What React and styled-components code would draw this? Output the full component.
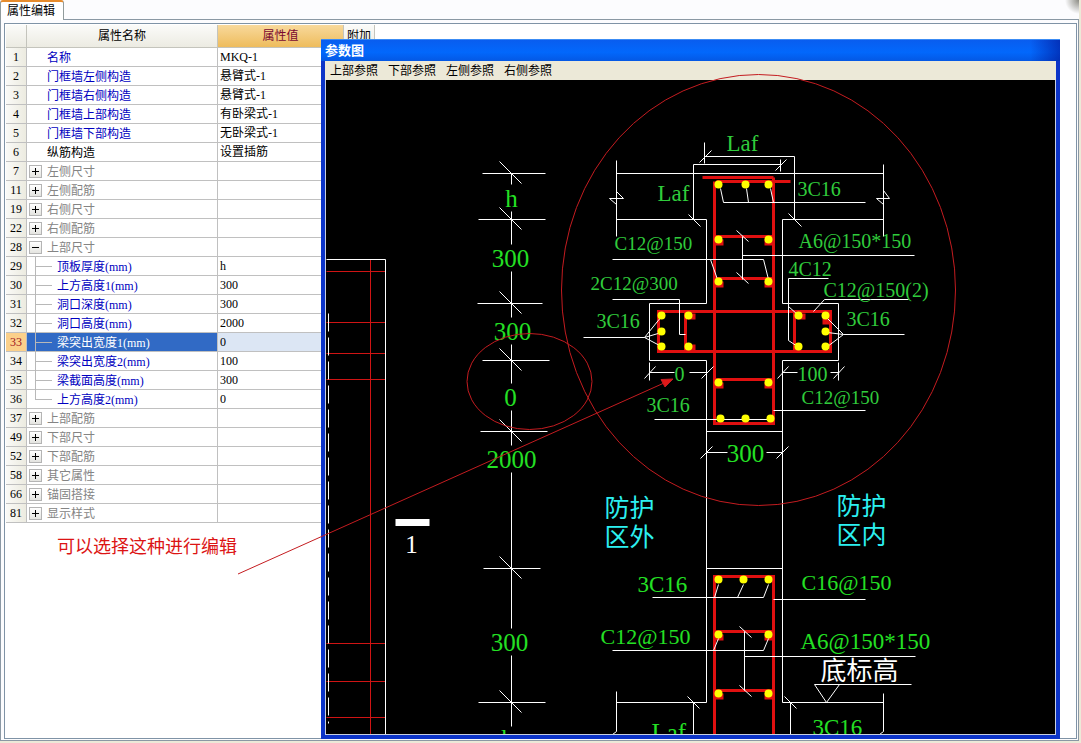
import { useState } from 'react';
import styled, { createGlobalStyle } from 'styled-components';

const rows = [
    { no: 1, name: '名称', value: 'MKQ-1', kind: 'field' },
    { no: 2, name: '门框墙左侧构造', value: '悬臂式-1', kind: 'field' },
    { no: 3, name: '门框墙右侧构造', value: '悬臂式-1', kind: 'field' },
    { no: 4, name: '门框墙上部构造', value: '有卧梁式-1', kind: 'field' },
    { no: 5, name: '门框墙下部构造', value: '无卧梁式-1', kind: 'field' },
    { no: 6, name: '纵筋构造', value: '设置插筋', kind: 'plain' },
    { no: 7, name: '左侧尺寸', kind: 'group' },
    { no: 11, name: '左侧配筋', kind: 'group' },
    { no: 19, name: '右侧尺寸', kind: 'group' },
    { no: 22, name: '右侧配筋', kind: 'group' },
    { no: 28, name: '上部尺寸', kind: 'group', open: true },
    { no: 29, name: '顶板厚度(mm)', value: 'h', kind: 'child' },
    { no: 30, name: '上方高度1(mm)', value: '300', kind: 'child' },
    { no: 31, name: '洞口深度(mm)', value: '300', kind: 'child' },
    { no: 32, name: '洞口高度(mm)', value: '2000', kind: 'child' },
    { no: 33, name: '梁突出宽度1(mm)', value: '0', kind: 'child' },
    { no: 34, name: '梁突出宽度2(mm)', value: '100', kind: 'child' },
    { no: 35, name: '梁截面高度(mm)', value: '300', kind: 'child' },
    { no: 36, name: '上方高度2(mm)', value: '0', kind: 'child', last: true },
    { no: 37, name: '上部配筋', kind: 'group' },
    { no: 49, name: '下部尺寸', kind: 'group' },
    { no: 52, name: '下部配筋', kind: 'group' },
    { no: 58, name: '其它属性', kind: 'group' },
    { no: 66, name: '锚固搭接', kind: 'group' },
    { no: 81, name: '显示样式', kind: 'group' },
];

const menus = ['上部参照', '下部参照', '左侧参照', '右侧参照'];

// y, x1, x2 of the level marks on the left dimension chain
const levels = [
    [173, 482, 545], [219, 478, 545], [303, 477, 542], [360, 482, 549],
    [431, 480, 547], [568, 483, 540], [702, 478, 545],
];

const chain = [[173, 184], [211, 244], [271, 317], [344, 383], [410, 445], [472, 628], [655, 726]];

const bars = [
    [718, 184], [745, 184], [768, 184], [718, 239], [768, 239], [718, 281], [768, 281],
    [661, 315], [661, 331], [661, 346], [688, 315], [688, 346],
    [798, 315], [798, 346], [825, 315], [825, 331], [825, 346],
    [718, 382], [768, 382], [720, 418], [745, 418], [770, 418],
    [718, 579], [743, 579], [768, 579], [718, 634], [768, 634], [718, 693], [768, 693],
];

const hooks = [
    [715, 239], [764, 239], [715, 281], [764, 281], [715, 382], [764, 382],
    [715, 634], [764, 634], [715, 693], [764, 693],
    [687, 313], [687, 344], [797, 313], [822, 318],
];

const outlines = [
    'M616 160V236M616 191L623 198H609L616 204',
    'M883 164V236M883 190L889 198H876L883 204',
    'M616 173H883',
    'M616 219H706V303H649V360H706V702H616',
    'M883 219H782V303H838V360H782V702H883',
    'M706 431H782M706 568H782',
    'M616 691V731L612 734M883 693V731L879 734',
];

const leaders = [
    'M704 142V163M704 156H794V219M699 162L711 150M788 213L801 226',
    'M780 159V171M780 164H693V219M775 170L786 159M688 214L700 226',
    'M720 188L723 202H865M746 188L748 202M770 188L773 202',
    'M612 259H763L768 279M710 259L717 279',
    'M742 236V279M736 230L748 241M736 272L748 283M742 255H914',
    'M828 278H788V340L797 346M788 306L797 314',
    'M908 299H824L813 311',
    'M612 299H679V334H685',
    'M583 337H644L661 316M644 337L661 332M644 337L661 346',
    'M904 334H843L827 318M843 334L827 332M843 334L827 346',
    'M649 362V380M649 372H674M689 372H706M644 378L655 366M701 378L713 366',
    'M838 362V380M782 372H797M830 372H838M777 378L788 366M833 378L844 366',
    'M654 419H773M773 410H865',
    'M706 452H727M766 452H782M700 458L712 446M776 458L788 446',
    'M652 597H763L768 584M718 584L714 597M743 584L737 597',
    'M773 599H865',
    'M612 650H763L768 638M718 638L713 650',
    'M744 631V690M739 626L751 637M739 685L751 696M744 656H915',
    'M911 684H814L826 702L839 684',
    'M693 734V702M687 696L699 708M790 734V702M784 696L796 708',
];

const steel = [
    'M702 177H773', 'M716 181H790', 'M714 181V423H773V177',
    'M714 236H773M714 278H773M714 379H773',
    'M658 311H830V351H658Z', 'M685 311V351M794 311V351',
    'M714 740V576H773V740', 'M714 631H773M714 690H773',
];

const labels = [
    { text: 'Laf', x: 726, y: 150, size: 23 },
    { text: 'Laf', x: 657, y: 200, size: 23 },
    { text: '3C16', x: 797, y: 195, size: 20 },
    { text: 'C12@150', x: 614, y: 249, size: 19 },
    { text: 'A6@150*150', x: 798, y: 247, size: 20 },
    { text: '4C12', x: 788, y: 275, size: 20 },
    { text: 'C12@150(2)', x: 823, y: 296, size: 20 },
    { text: '2C12@300', x: 590, y: 289, size: 19 },
    { text: '3C16', x: 596, y: 327, size: 20 },
    { text: '3C16', x: 846, y: 325, size: 20 },
    { text: '0', x: 674, y: 380, size: 20 },
    { text: '100', x: 797, y: 380, size: 20 },
    { text: 'C12@150', x: 801, y: 403, size: 19 },
    { text: '3C16', x: 646, y: 411, size: 20 },
    { text: '3C16', x: 637, y: 591, size: 23, bright: true },
    { text: 'C16@150', x: 801, y: 589, size: 22, bright: true },
    { text: 'C12@150', x: 600, y: 643, size: 22, bright: true },
    { text: 'A6@150*150', x: 800, y: 648, size: 23, bright: true },
    { text: '3C16', x: 812, y: 734, size: 23, bright: true },
    { text: 'Laf', x: 651, y: 740, size: 25, bright: true },
];

const dimLabels = [
    ['h', 511, 206], ['300', 510, 266], ['300', 512, 339], ['0', 510, 405],
    ['2000', 511, 467], ['300', 509, 650], ['h', 507, 746], ['300', 745, 461],
];

function Drawing() {
    return (
        <Sheet role="img" aria-label="参数图">
            {/* half a pixel keeps the one pixel strokes sharp */}
            <g transform="translate(-325.5 -79.5)">
                <RedLine d="M370 259V740M326 271H385M326 322H385M326 353H385M326 379H385M326 643H385M326 681H385M326 717H385" />
                <WhiteLine d="M326 259H385V740" />
                <WhiteLine d="M328 313V723" strokeDasharray="18 6" />
                <WhiteLine d="M395 522H429" $width={7} />

                {chain.map(([from, to]) => (
                    <WhiteLine key={from} d={`M511 ${from}V${to}`} />
                ))}
                {levels.map(([y, from, to]) => (
                    <WhiteLine key={y} d={`M${from} ${y}H${to}M499 ${y - 12}L521 ${y + 10}`} />
                ))}

                {steel.map(d => <Steel key={d} d={d} />)}
                {hooks.map(([x, y]) => (
                    <rect key={`${x}-${y}`} x={x} y={y} width="8" height="6" fill="#e01010" />
                ))}
                {outlines.map(d => <WhiteLine key={d} d={d} />)}
                {leaders.map(d => <WhiteLine key={d} d={d} />)}
                {bars.map(([x, y]) => (
                    <circle key={`${x}-${y}`} cx={x} cy={y} r="4" fill="#ffff00" />
                ))}

                {labels.map(({ text, x, y, size, bright }) => (
                    <Label key={`${x}-${y}`} x={x} y={y} $size={size} $color={bright && '#24e024'}>{text}</Label>
                ))}
                {dimLabels.map(([text, x, y]) => (
                    <Label key={`${x}-${y}`} x={x} y={y} $size={25} $color="#24e024" textAnchor="middle">{text}</Label>
                ))}
                <Label x={411} y={552} $size={25} $color="#fff" textAnchor="middle">1</Label>
                <Label x={604} y={516} $size={25} $color="#2cf0f0">防护</Label>
                <Label x={604} y={545} $size={25} $color="#2cf0f0">区外</Label>
                <Label x={836} y={514} $size={25} $color="#2cf0f0">防护</Label>
                <Label x={836} y={543} $size={25} $color="#2cf0f0">区内</Label>
                <Label x={820} y={679} $size={26} $color="#fff">底标高</Label>
            </g>
        </Sheet>
    );
}

function PropertyTable() {
    const [selected, setSelected] = useState(33);

    return (
        <Table>
            <colgroup>
                <Col $width={21} />
                <Col $width={191} />
                <Col $width={126} />
                <Col $width={31} />
            </colgroup>
            <thead>
                <tr>
                    <HeadCell />
                    <HeadCell>属性名称</HeadCell>
                    <HeadCell $active>属性值</HeadCell>
                    <HeadCell>附加</HeadCell>
                </tr>
            </thead>
            <tbody>
                {rows.map(row => {
                    const active = row.no === selected;
                    return (
                        <tr key={row.no} onClick={() => setSelected(row.no)}>
                            <NumberCell $active={active}>{row.no}</NumberCell>
                            <NameCell $kind={row.kind} $active={active}>
                                <NameLine>
                                    <Gutter $child={row.kind === 'child'}>
                                        {row.kind === 'group' && (
                                            <Toggle aria-label={row.open ? '收起' : '展开'} $open={row.open} />
                                        )}
                                        {row.kind === 'child' && <Branch $last={row.last} />}
                                    </Gutter>
                                    <NameText>{row.name}</NameText>
                                </NameLine>
                            </NameCell>
                            <ValueCell $active={active}>{row.value}</ValueCell>
                            <ValueCell />
                        </tr>
                    );
                })}
            </tbody>
        </Table>
    );
}

export default function App() {
    return (
        <Page>
            <GlobalStyle />
            <TabStrip>
                <Tab>属性编辑</Tab>
            </TabStrip>
            <Panel>
                <PanelBody>
                    <PropertyTable />
                    <Note>可以选择这种进行编辑</Note>
                </PanelBody>
            </Panel>

            <Dialog>
                <TitleBar>参数图</TitleBar>
                <MenuBar>
                    {menus.map(item => <MenuButton key={item}>{item}</MenuButton>)}
                </MenuBar>
                <Drawing />
            </Dialog>

            <Markup aria-hidden="true">
                <ellipse cx="758.5" cy="290" rx="197" ry="215.5" />
                <ellipse cx="529.5" cy="381.5" rx="62.5" ry="48" />
                <path d="M238 574L664 383" />
                <path d="M673 379L661 379.5L665 387Z" fill="#e01818" />
            </Markup>
        </Page>
    );
}

// Styles
const GlobalStyle = createGlobalStyle`
    * {
        box-sizing: border-box;
    }

    body {
        margin: 0;
        background: #ece9d8;
        font-family: "Liberation Serif", "Noto Sans CJK SC", serif;
        font-size: 12px;
        color: #000;
    }

    button {
        font: inherit;
        color: inherit;
    }
`;

const Page = styled.div`
    position: relative;
    display: flex;
    flex-direction: column;
    min-height: 100vh;
    padding: 0 2px 2px 0;
    overflow: hidden;
`;

const TabStrip = styled.div`
    display: flex;
    height: 19px;
    background: radial-gradient(circle at 100% 0, #8c8c84 0, #fcfcfe 14px);
`;

const Tab = styled.button`
    width: 64px;
    height: 20px;
    padding: 0 0 0 6px;
    border: 1px solid #919b9c;
    border-top: 2px solid #e68b2c;
    border-bottom: 0;
    border-radius: 3px 3px 0 0;
    background: #fff;
    line-height: 16px;
    text-align: left;
    white-space: nowrap;
    z-index: 1;
`;

const Panel = styled.div`
    flex: 1;
    display: flex;
    padding: 3px 1px 1px 3px;
    border: 1px solid #8a98a4;
    background: #fcfcfe;
`;

const PanelBody = styled.div`
    flex: 1;
    padding: 1px;
    border: 1px solid #7f93a6;
    background: #fff;
`;

const Table = styled.table`
    width: 369px;
    table-layout: fixed;
    border-collapse: separate;
    border-spacing: 0;
`;

const Col = styled.col`
    width: ${props => props.$width}px;
`;

const HeadCell = styled.th`
    height: 23px;
    padding: 0;
    overflow: hidden;
    border-right: 1px solid #c4c4bc;
    border-bottom: 1px solid #c4c4bc;
    background: ${props => props.$active
        ? 'linear-gradient(#f8d99c, #eebc5c)'
        : 'linear-gradient(#fbfbf9, #ecebe2)'};
    color: ${props => props.$active ? '#7a0830' : '#000'};
    font-weight: normal;
    line-height: 22px;
    white-space: nowrap;
`;

const Cell = styled.td`
    height: 19px;
    padding: 0;
    border-right: 1px solid #c0c0c0;
    border-bottom: 1px solid #c0c0c0;
    line-height: 18px;
    white-space: nowrap;
`;

const NumberCell = styled(Cell)`
    background: ${props => props.$active ? '#fbd08a' : 'linear-gradient(90deg, #fafaf7, #ecebe0)'};
    color: ${props => props.$active ? '#a01020' : '#000'};
    text-align: center;
`;

const nameColors = { field: '#0000c0', child: '#0000c0', plain: '#000', group: '#848484' };

const NameCell = styled(Cell)`
    background: ${props => props.$active ? '#316ac5' : '#fff'};
    color: ${props => props.$active ? '#fff' : nameColors[props.$kind]};
`;

const NameLine = styled.div`
    display: flex;
    align-items: center;
    height: 18px;
`;

const NameText = styled.span`
    padding-top: 1px;
`;

const Gutter = styled.span`
    flex: none;
    display: flex;
    align-items: center;
    width: ${props => props.$child ? 30 : 20}px;
    height: 18px;
    padding-left: 2px;
`;

const Toggle = styled.button`
    width: 13px;
    height: 13px;
    padding: 0;
    border: 1px solid #b4b4b4;
    background:
        linear-gradient(#000, #000) center / 7px 1px no-repeat,
        linear-gradient(#000, #000) center / ${props => props.$open ? '0 0' : '1px 7px'} no-repeat,
        linear-gradient(#fff, #e4e4e0);
`;

const Branch = styled.span`
    align-self: flex-start;
    width: 17px;
    height: ${props => props.$last ? 10 : 19}px;
    margin-left: 6px;
    border-left: 1px solid #b8b8b8;
    background: linear-gradient(#b8b8b8, #b8b8b8) 0 9px / 17px 1px no-repeat;
`;

const ValueCell = styled(Cell)`
    padding-left: 2px;
    background: ${props => props.$active ? '#dce6f4' : '#fff'};
`;

const Note = styled.p`
    margin: 11px 0 0 51px;
    color: #dc1414;
    font-size: 18px;
    line-height: 26px;
`;

const Dialog = styled.section`
    position: absolute;
    top: 39px;
    right: 21px;
    bottom: 4px;
    left: 321px;
    display: flex;
    flex-direction: column;
    border: solid #0c34c8;
    border-width: 0 4px 4px 4px;
    background: #1446d8;
`;

const TitleBar = styled.div`
    height: 22px;
    margin: 0 -4px;
    padding-left: 4px;
    background:
        linear-gradient(#3c8cf4, #3c8cf4) 0 0 / 100% 1px no-repeat,
        linear-gradient(90deg, transparent 96%, rgba(0, 20, 150, 0.6)),
        linear-gradient(#0a5cee, #0268fc 60%, #0458e4);
    color: #fff;
    font-weight: bold;
    font-size: 13px;
    line-height: 24px;
`;

const MenuBar = styled.div`
    display: flex;
    gap: 10px;
    height: 19px;
    padding-left: 5px;
    background: #ece9d8;
`;

const MenuButton = styled.button`
    padding: 0;
    border: 0;
    background: none;
    line-height: 18px;
    white-space: nowrap;
`;

const Sheet = styled.svg`
    display: block;
    flex: 1;
    width: 100%;
    min-height: 0;
    border: solid #c8d0e0;
    border-width: 0 1px 1px 1px;
    background: #000;
`;

const WhiteLine = styled.path`
    fill: none;
    stroke: #fff;
    stroke-width: ${props => props.$width || 1};
`;

const RedLine = styled.path`
    fill: none;
    stroke: #d01414;
    stroke-width: 1;
`;

const Steel = styled.path`
    fill: none;
    stroke: #e01010;
    stroke-width: 3;
`;

const Label = styled.text`
    fill: ${props => props.$color || '#30cc3c'};
    font-size: ${props => props.$size}px;
`;

const Markup = styled.svg`
    position: absolute;
    top: 0;
    left: 0;
    width: 100%;
    height: 100%;
    fill: none;
    stroke: #c41c20;
    pointer-events: none;
`;
